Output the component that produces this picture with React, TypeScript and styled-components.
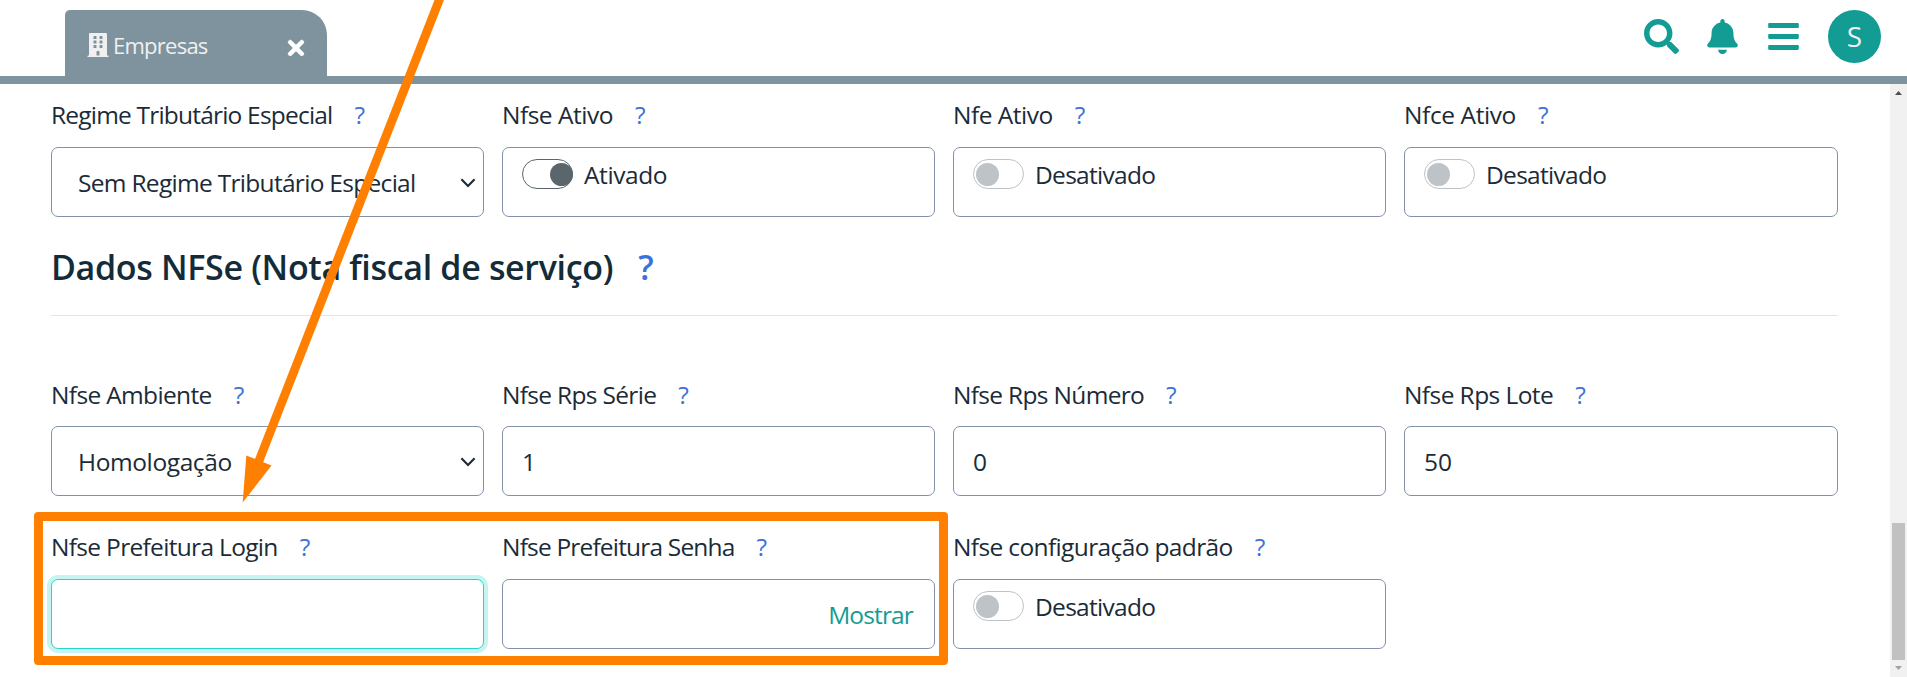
import React from "react";
import styled, { createGlobalStyle, css } from "styled-components";
import { FaBars, FaBell, FaBuilding, FaSearch, FaTimes } from "react-icons/fa";

const Global = createGlobalStyle`
  * { box-sizing: border-box; }
  html, body { margin: 0; padding: 0; background: #fff; overflow: hidden; }
  body { font-family: "Open Sans", "Noto Sans", sans-serif; color: #1b2b38; }
`;

const Page = styled.div`
  position: relative;
  display: flex;
  flex-direction: column;
  width: 1907px;
  height: 677px;
  overflow: hidden;
`;

const Header = styled.header`
  display: flex;
  justify-content: space-between;
  height: 84px;
  padding: 10px 26px 0 65px;
  border-bottom: 8px solid #7e939e;
`;

const Tab = styled.div`
  display: flex;
  align-items: flex-start;
  width: 262px;
  height: 66px;
  padding: 23px 19px 0 21px;
  border-radius: 5px 25px 0 0;
  background: #7e939e;
  color: #f0f0f0;
`;

const TabTitle = styled.span`
  flex: 1;
  margin: -3px 0 0 3px;
  font-size: 22px;
  line-height: 30px;
  letter-spacing: -0.75px;
  white-space: nowrap;
`;

const CloseIcon = styled(FaTimes)`
  margin-top: 3px;
  color: #fff;
`;

const Actions = styled.nav`
  display: flex;
  align-items: flex-start;
  color: #139c93;
  svg { margin-top: 9px; }
`;

const SearchIcon = styled(FaSearch)` margin-right: 26px; `;
const BellIcon = styled(FaBell)` margin-right: 26px; `;
const BarsIcon = styled(FaBars)` margin-right: 27px; `;

const Avatar = styled.div`
  display: flex;
  align-items: center;
  justify-content: center;
  width: 53px;
  height: 53px;
  border-radius: 50%;
  background: #139c93;
  color: #f0f0f0;
  font-size: 28px;
  line-height: 53px;
`;

const Body = styled.div`
  display: flex;
  flex: 1;
  min-height: 0;
`;

const Form = styled.main`
  flex: 1;
  padding: 12px 52px 0 51px;
`;

const Row = styled.section<{ $top?: number }>`
  display: grid;
  grid-template-columns: 433px 433px 433px 1fr;
  column-gap: 18px;
  margin-top: ${(p) => p.$top ?? 0}px;
`;

const FieldBlock = styled.div<{ $labelHeight: number }>`
  display: grid;
  grid-template-rows: ${(p) => p.$labelHeight}px 70px;
`;

const Label = styled.label<{ $spacing: number }>`
  font-size: 24.5px;
  line-height: 38px;
  letter-spacing: ${(p) => p.$spacing}px;
  white-space: nowrap;
`;

const Help = styled.span`
  margin-left: 22px;
  color: #3f72d8;
  letter-spacing: 0;
`;

const Control = styled.div<{ $focus?: boolean }>`
  display: flex;
  align-items: center;
  height: 70px;
  padding: 0 19px;
  border: 1px solid #8290a8;
  border-radius: 7px;
  background: #fff;
  font-size: 24.5px;
  line-height: 34px;
  ${(p) => p.$focus && css`
    border-color: #26d6ca;
    box-shadow: 0 0 0 4px #c6f5f1;
  `}
`;

const Value = styled.span<{ $spacing?: number }>`
  letter-spacing: ${(p) => p.$spacing ?? 0}px;
  padding-top: 2px;
  white-space: nowrap;
`;

const SelectControl = styled(Control)`
  justify-content: space-between;
  padding: 0 7px 0 26px;
  svg { margin-top: 2px; }
`;

const ToggleControl = styled(Control)`
  align-items: flex-start;
  padding: 11px 19px;
`;

const Track = styled.span<{ $on?: boolean }>`
  display: flex;
  align-items: center;
  justify-content: ${(p) => (p.$on ? "flex-end" : "flex-start")};
  width: 51px;
  height: 30px;
  margin-right: 11px;
  padding: ${(p) => (p.$on ? "0" : "1px 0 0 2px")};
  border: 1px solid ${(p) => (p.$on ? "#5a666c" : "#bdc3c7")};
  border-radius: 15px;
`;

const Knob = styled.span<{ $on?: boolean }>`
  width: 23px;
  height: 23px;
  margin-right: ${(p) => (p.$on ? "-1px" : "0")};
  border-radius: 50%;
  background: ${(p) => (p.$on ? "#5a666c" : "#bdc3c7")};
`;

const ToggleText = styled.span<{ $spacing: number }>`
  margin-top: -1px;
  letter-spacing: ${(p) => p.$spacing}px;
`;

const Reveal = styled.button`
  margin-left: auto;
  padding: 2px 2px 0 0;
  border: 0;
  background: none;
  color: #139c93;
  font: inherit;
  letter-spacing: -0.85px;
`;

const Heading = styled.h2`
  height: 73px;
  margin: 26px 0 0;
  border-bottom: 1px solid #e3e4e5;
  color: #142b3a;
  font-size: 34px;
  font-weight: 600;
  line-height: 48px;
  letter-spacing: -0.33px;
  white-space: nowrap;
`;

const HeadingHelp = styled(Help)` margin-left: 25px; `;

const ScrollTrack = styled.aside`
  display: flex;
  flex-direction: column;
  align-items: center;
  width: 17px;
  padding: 7px 0;
  background: #f1f1f1;
`;

const ScrollThumb = styled.div`
  width: 13px;
  height: 137px;
  margin: auto 0 6px;
  background: #c1c1c1;
`;

const HighlightBox = styled.div`
  position: absolute;
  left: 34px;
  top: 512px;
  width: 914px;
  height: 153px;
  border: 9px solid #ff8000;
  border-radius: 4px;
`;

const Pointer = styled.svg`
  position: absolute;
  left: 0;
  top: 0;
`;

const Chevron = () => (
  <svg width="16" height="10" viewBox="0 0 16 10" fill="none">
    <path d="M1.4 1.2 8 8l6.6-6.8" stroke="#1b2b38" strokeWidth="2.1" />
  </svg>
);

type FieldProps = { label: string; spacing?: number; labelHeight?: number; children: React.ReactNode };

const Field = ({ label, spacing = -0.5, labelHeight = 51, children }: FieldProps) => (
  <FieldBlock $labelHeight={labelHeight}>
    <Label $spacing={spacing}>{label}<Help>?</Help></Label>
    {children}
  </FieldBlock>
);

const Toggle = ({ on }: { on?: boolean }) => (
  <ToggleControl>
    <Track $on={on}><Knob $on={on} /></Track>
    <ToggleText $spacing={on ? -0.4 : -0.7}>{on ? "Ativado" : "Desativado"}</ToggleText>
  </ToggleControl>
);

export default function App() {
  return (
    <Page>
      <Global />
      <Header>
        <Tab>
          <FaBuilding size={24} />
          <TabTitle>Empresas</TabTitle>
          <CloseIcon size={24} />
        </Tab>
        <Actions>
          <SearchIcon size={35} />
          <BellIcon size={35} />
          <BarsIcon size={35} />
          <Avatar>S</Avatar>
        </Actions>
      </Header>
      <Body>
        <Form>
          <Row>
            <Field label="Regime Tributário Especial" spacing={-0.8}>
              <SelectControl><Value $spacing={-0.7}>Sem Regime Tributário Especial</Value><Chevron /></SelectControl>
            </Field>
            <Field label="Nfse Ativo"><Toggle on /></Field>
            <Field label="Nfe Ativo"><Toggle /></Field>
            <Field label="Nfce Ativo" spacing={-0.4}><Toggle /></Field>
          </Row>
          <Heading>Dados NFSe (Nota fiscal de serviço)<HeadingHelp>?</HeadingHelp></Heading>
          <Row $top={60}>
            <Field label="Nfse Ambiente" labelHeight={50} spacing={-0.65}>
              <SelectControl><Value $spacing={-0.4}>Homologação</Value><Chevron /></SelectControl>
            </Field>
            <Field label="Nfse Rps Série" labelHeight={50} spacing={-0.68}><Control><Value>1</Value></Control></Field>
            <Field label="Nfse Rps Número" labelHeight={50} spacing={-0.68}><Control><Value>0</Value></Control></Field>
            <Field label="Nfse Rps Lote" labelHeight={50} spacing={-0.58}><Control><Value>50</Value></Control></Field>
          </Row>
          <Row $top={32}>
            <Field label="Nfse Prefeitura Login" spacing={-0.68}><Control $focus /></Field>
            <Field label="Nfse Prefeitura Senha" spacing={-0.82}><Control><Reveal>Mostrar</Reveal></Control></Field>
            <Field label="Nfse configuração padrão" spacing={-0.63}><Toggle /></Field>
          </Row>
        </Form>
        <ScrollTrack>
          <svg width="7" height="4" viewBox="0 0 7 4"><path d="M0 4 3.5 0 7 4z" fill="#505050" /></svg>
          <ScrollThumb />
          <svg width="7" height="4" viewBox="0 0 7 4"><path d="M0 0 3.5 4 7 0z" fill="#a3a3a3" /></svg>
        </ScrollTrack>
      </Body>
      <HighlightBox />
      <Pointer width="460" height="510" viewBox="0 0 460 510">
        <path d="M441.2 -5 258.5 462" stroke="#ff8000" strokeWidth="8.8" />
        <path d="M246.3 455.5 271.5 465.5 242.7 502.5z" fill="#ff8000" />
      </Pointer>
    </Page>
  );
}
